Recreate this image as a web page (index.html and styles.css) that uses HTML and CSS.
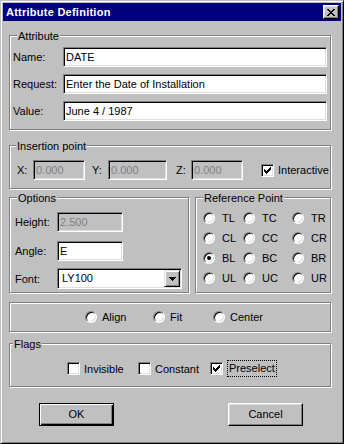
FILE: index.html
```html
<!DOCTYPE html>
<html>
<head>
<meta charset="utf-8">
<title>Attribute Definition</title>
<link rel="stylesheet" href="styles.css">
</head>
<body>
<div class="window">
  <div class="titlebar">
    <span class="title">Attribute Definition</span>
    <span class="close"><svg width="8" height="7" viewBox="0 0 8 7" shape-rendering="crispEdges"><path d="M0 0h2v1h-2z M6 0h2v1h-2z M1 1h2v1h-2z M5 1h2v1h-2z M2 2h4v1h-4z M3 3h2v1h-2z M2 4h4v1h-4z M1 5h2v1h-2z M5 5h2v1h-2z M0 6h2v1h-2z M6 6h2v1h-2z" fill="#000"/></svg></span>
  </div>
  <div class="content">
    <section class="group attr">
      <div class="caption cap-attr">Attribute</div>
      <div class="attr-rows">
        <div class="field"><span class="lbl lbl-attr">Name:</span><span class="edit grow">DATE</span></div>
        <div class="field"><span class="lbl lbl-attr">Request:</span><span class="edit grow">Enter the Date of Installation</span></div>
        <div class="field"><span class="lbl lbl-attr">Value:</span><span class="edit grow">June 4 / 1987</span></div>
      </div>
    </section>

    <section class="group ins">
      <div class="caption cap-ins">Insertion point</div>
      <div class="ins-row">
        <span class="lbl lx">X:</span><span class="edit dis wx">0.000</span>
        <span class="lbl ly">Y:</span><span class="edit dis wy">0.000</span>
        <span class="lbl lz">Z:</span><span class="edit dis wz">0.000</span>
        <span class="check on ck-inter"><svg width="7" height="7" viewBox="0 0 7 7" shape-rendering="crispEdges"><path d="M6 0h1v1h-1z M5 1h2v1h-2z M0 2h1v1h-1z M4 2h3v1h-3z M0 3h2v1h-2z M3 3h3v1h-3z M0 4h5v1h-5z M1 5h3v1h-3z M2 6h1v1h-1z" fill="#000"/></svg></span><span class="ck-text">Interactive</span>
      </div>
    </section>

    <div class="split">
      <section class="group opts">
        <div class="caption cap-opts">Options</div>
        <div class="opt-rows">
          <div class="field"><span class="lbl lbl-opt">Height:</span><span class="edit dis w66">2.500</span></div>
          <div class="field f-angle"><span class="lbl lbl-opt">Angle:</span><span class="edit w66">E</span></div>
          <div class="field f-font"><span class="lbl lbl-opt">Font:</span><span class="combo"><span class="combo-val">LY100</span><span class="combo-btn"><svg width="7" height="4" viewBox="0 0 7 4" shape-rendering="crispEdges"><path d="M0 0h7v1h-7z M1 1h5v1h-5z M2 2h3v1h-3z M3 3h1v1h-1z" fill="#000"/></svg></span></span></div>
        </div>
      </section>
      <section class="group refpt">
        <div class="caption cap-ref">Reference Point</div>
        <div class="radio-grid">
          <span class="opt"><span class="radio"></span><span>TL</span></span>
          <span class="opt"><span class="radio"></span><span>TC</span></span>
          <span class="opt"><span class="radio"></span><span>TR</span></span>
          <span class="opt"><span class="radio"></span><span>CL</span></span>
          <span class="opt"><span class="radio"></span><span>CC</span></span>
          <span class="opt"><span class="radio"></span><span>CR</span></span>
          <span class="opt"><span class="radio on"></span><span>BL</span></span>
          <span class="opt"><span class="radio"></span><span>BC</span></span>
          <span class="opt"><span class="radio"></span><span>BR</span></span>
          <span class="opt"><span class="radio"></span><span>UL</span></span>
          <span class="opt"><span class="radio"></span><span>UC</span></span>
          <span class="opt"><span class="radio"></span><span>UR</span></span>
        </div>
      </section>
    </div>

    <section class="group align">
      <div class="align-row">
        <span class="opt a-align"><span class="radio"></span><span>Align</span></span>
        <span class="opt a-fit"><span class="radio"></span><span>Fit</span></span>
        <span class="opt a-center"><span class="radio"></span><span>Center</span></span>
      </div>
    </section>

    <section class="group flags">
      <div class="caption cap-flags">Flags</div>
      <div class="flag-row">
        <span class="flag fl-inv"><span class="check"></span><span class="ck-text">Invisible</span></span>
        <span class="flag fl-con"><span class="check"></span><span class="ck-text">Constant</span></span>
        <span class="flag fl-pre"><span class="check on"><svg width="7" height="7" viewBox="0 0 7 7" shape-rendering="crispEdges"><path d="M6 0h1v1h-1z M5 1h2v1h-2z M0 2h1v1h-1z M4 2h3v1h-3z M0 3h2v1h-2z M3 3h3v1h-3z M0 4h5v1h-5z M1 5h3v1h-3z M2 6h1v1h-1z" fill="#000"/></svg></span><span class="ck-text focus">Preselect</span></span>
      </div>
    </section>

    <div class="buttons">
      <span class="btn default">OK</span>
      <span class="btn cancel">Cancel</span>
    </div>
  </div>
</div>
</body>
</html>
```

FILE: styles.css
```css
* { box-sizing: border-box; }
html, body { margin: 0; padding: 0; background: #c0c0c0; }
body {
  width: 344px; height: 444px; overflow: hidden;
  font-family: "Liberation Sans", Arial, sans-serif;
  font-size: 11px; color: #000;
}
.window {
  width: 344px; height: 444px;
  border: 1px solid; border-color: #c0c0c0 #000 #000 #c0c0c0;
  box-shadow: inset 1px 1px 0 #fff, inset -1px -1px 0 #808080;
  padding: 2px; background: #c0c0c0;
  display: flex; flex-direction: column;
}
.titlebar {
  height: 18px; flex: none; background: #000080; color: #fff;
  font-weight: bold; display: flex; align-items: center;
  justify-content: space-between; padding: 0 2px 0 3px;
}
.title { letter-spacing: 0.25px; }
.close {
  width: 16px; height: 14px; background: #c0c0c0;
  border: 1px solid; border-color: #fff #000 #000 #fff;
  box-shadow: inset -1px -1px 0 #808080, inset 1px 1px 0 #dfdfdf;
  display: flex; align-items: center; justify-content: center;
}
.close svg { display: block; margin-right: 1px; }

.content { padding: 14px 10px 0 6px; display: flex; flex-direction: column; }

.group {
  border: 1px solid #808080;
  box-shadow: 1px 1px 0 #fff, inset 1px 1px 0 #fff;
}
.caption {
  width: max-content; margin: -6px 0 0 7px; padding: 0 1px;
  background: #c0c0c0; line-height: 13px; height: 13px;
}
.cap-ins { margin-left: 6px; }
.cap-opts { margin-left: 7px; }
.cap-ref { margin-left: 7px; }
.cap-flags { margin-left: 3px; }

.field { display: flex; align-items: center; }
.lbl { flex: none; }
.edit {
  height: 20px; background: #fff; flex: none;
  border: 1px solid; border-color: #808080 #fff #fff #808080;
  box-shadow: inset 1px 1px 0 #000, inset -1px -1px 0 #dfdfdf;
  padding: 0 2px 1px; display: flex; align-items: center; white-space: nowrap;
}
.edit.grow { flex: 1; }
.edit.dis { background: #c0c0c0; color: #808080; }

/* Attribute */
.attr-rows { padding: 4px 3px 8px 3px; display: flex; flex-direction: column; gap: 7px; }
.lbl-attr { width: 50px; }

/* Insertion point */
.ins { margin-top: 15px; }
.ins-row { padding: 7px 0 8px 7px; display: flex; align-items: center; }
.lx { width: 16px; }
.wx { width: 52px; }
.ly { width: 16px; margin-left: 7px; }
.wy { width: 59px; }
.lz { width: 15px; margin-left: 9px; }
.wz { width: 52px; }
.ck-inter { margin-left: 18px; }
.ck-text { margin-left: 4px; white-space: nowrap; }

.check {
  width: 13px; height: 13px; background: #fff; flex: none;
  border: 1px solid; border-color: #808080 #fff #fff #808080;
  box-shadow: inset 1px 1px 0 #000, inset -1px -1px 0 #dfdfdf;
  display: flex; align-items: center; justify-content: center;
}
.check svg { display: block; }

/* Options / Reference */
.split { display: flex; margin-top: 8px; }
.opts { width: 180px; flex: none; }
.refpt { flex: 1; margin-left: 6px; }
.opt-rows { padding: 7px 6px 3px 5px; display: flex; flex-direction: column; }
.lbl-opt { width: 42px; }
.w66 { width: 66px; }
.f-angle { margin-top: 9px; }
.f-font { margin-top: 7px; }
.combo {
  width: 125px; height: 21px; background: #fff;
  border: 1px solid; border-color: #808080 #fff #fff #808080;
  box-shadow: inset 1px 1px 0 #000, inset -1px -1px 0 #dfdfdf;
  padding: 1px; display: flex;
}
.combo-val { flex: 1; padding: 0 0 1px 3px; display: flex; align-items: center; }
.combo-btn {
  width: 16px; background: #c0c0c0;
  border: 1px solid; border-color: #dfdfdf #000 #000 #dfdfdf;
  box-shadow: inset 1px 1px 0 #fff, inset -1px -1px 0 #808080;
  display: flex; align-items: center; justify-content: center;
}
.combo-btn svg { display: block; }

.radio-grid {
  padding: 3px 0 4px 7px;
  display: grid; grid-template-columns: 40px 49px 1fr;
  grid-auto-rows: 20px;
}
.opt { display: flex; align-items: center; gap: 7px; white-space: nowrap; }
.radio {
  width: 12px; height: 12px; border-radius: 50%; background: #fff; flex: none;
  border: 1px solid; border-color: #808080 #fff #fff #808080;
  box-shadow: inset 1px 1px 0 #000, inset -1px -1px 0 #dfdfdf;
  display: flex; align-items: center; justify-content: center;
}
.radio.on::after {
  content: ""; width: 4px; height: 4px; border-radius: 50%; background: #000;
}

/* Align */
.align { margin-top: 9px; height: 30px; }
.align-row { height: 28px; display: flex; align-items: center; padding-left: 75px; }
.align-row .opt { gap: 5px; }
.a-align { width: 68px; }
.a-fit { width: 60px; }

/* Flags */
.flags { margin-top: 11px; }
.flag-row { padding: 7px 0 7px 57px; height: 35px; display: flex; align-items: center; }
.flag { display: flex; align-items: center; }
.fl-inv { width: 71px; }
.fl-con { width: 72px; }
.focus { border: 1px dotted #000; padding: 0 1px; line-height: 15px; margin-left: 4px; }
.fl-pre .ck-text.focus { margin-left: 4px; }

/* Buttons */
.buttons { display: flex; margin-top: 16px; padding-left: 30px; }
.btn {
  width: 75px; height: 23px; display: flex; align-items: center; justify-content: center;
  border: 1px solid; border-color: #fff #000 #000 #fff;
  box-shadow: inset -1px -1px 0 #808080, inset 1px 1px 0 #dfdfdf;
  padding-bottom: 1px;
}
.btn.default {
  border-color: #000;
  box-shadow: inset 1px 1px 0 #fff, inset -1px -1px 0 #000, inset -2px -2px 0 #808080;
}
.btn.cancel { margin-left: 114px; }
```
